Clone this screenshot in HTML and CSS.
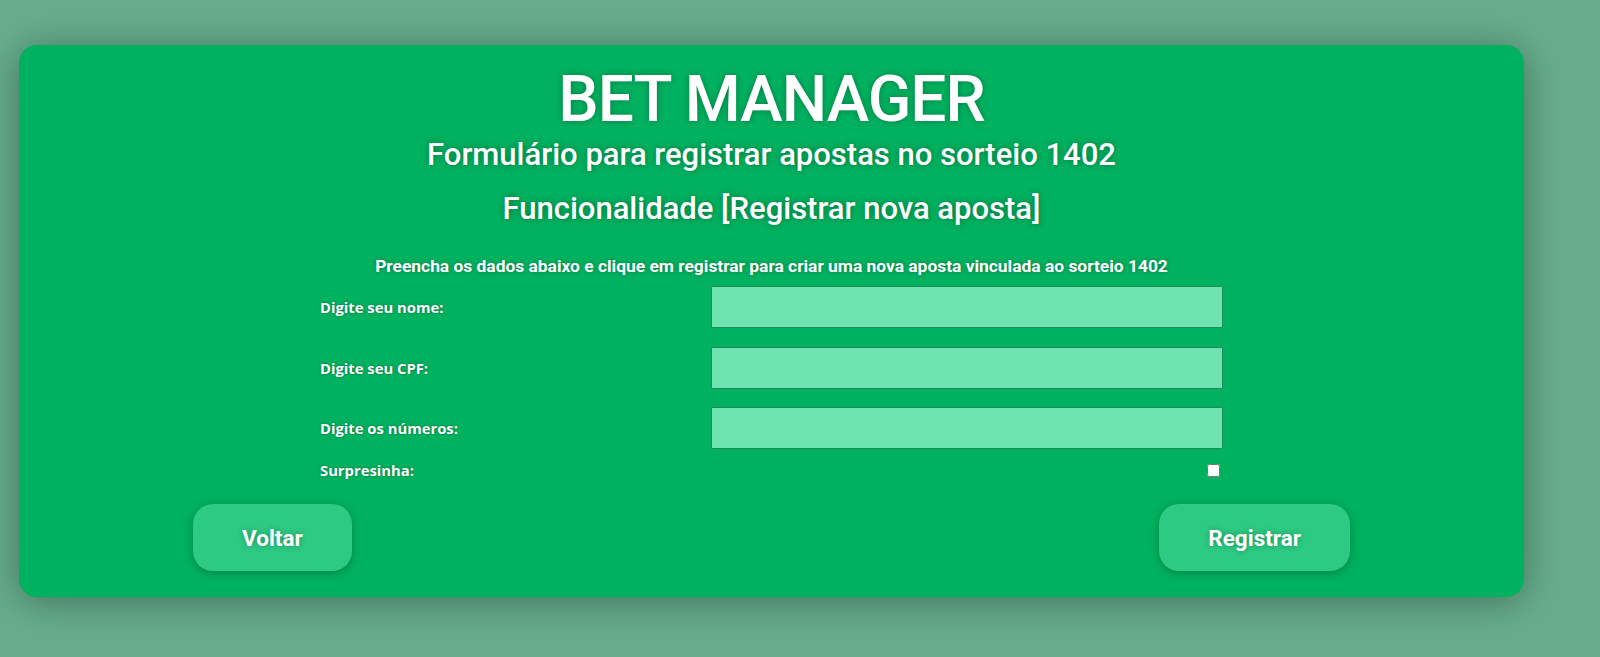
FILE: index.html
```html
<!DOCTYPE html>
<html lang="pt-BR">
<head>
<meta charset="utf-8">
<title>Bet Manager</title>
<link rel="stylesheet" href="styles.css">
</head>
<body>
<main class="card">
  <h1 class="title">BET MANAGER</h1>
  <h2 class="subtitle">Formulário para registrar apostas no sorteio 1402</h2>
  <h2 class="subtitle feature">Funcionalidade [Registrar nova aposta]</h2>
  <p class="intro">Preencha os dados abaixo e clique em registrar para criar uma nova aposta vinculada ao sorteio 1402</p>
  <form class="form">
    <div class="row">
      <label class="label" for="nome">Digite seu nome:</label>
      <input class="field" id="nome" type="text">
    </div>
    <div class="row">
      <label class="label" for="cpf">Digite seu CPF:</label>
      <input class="field" id="cpf" type="text">
    </div>
    <div class="row last-field">
      <label class="label" for="numeros">Digite os números:</label>
      <input class="field" id="numeros" type="text">
    </div>
    <div class="row check-row">
      <label class="label" for="surpresinha">Surpresinha:</label>
      <input class="check" id="surpresinha" type="checkbox">
    </div>
  </form>
  <div class="actions">
    <button class="btn" type="button">Voltar</button>
    <button class="btn" type="button">Registrar</button>
  </div>
</main>
</body>
</html>
```
FILE: styles.css
```css
* { box-sizing: border-box; }

html, body {
  margin: 0;
  height: 100%;
}

body {
  background: #67ad8d;
  font-family: Roboto, "Liberation Sans", sans-serif;
  color: #fff;
  padding: 45px 0 0 19px;
}

.card {
  width: 1505px;
  height: 552px;
  background: #00b15f;
  border-radius: 18px;
  box-shadow: 0 4px 40px rgba(0, 0, 0, 0.35);
  padding: 17px 0 0 0;
  display: flex;
  flex-direction: column;
  align-items: center;
}

.title {
  margin: 0;
  font-size: 64px;
  line-height: 76px;
  font-weight: 500;
  letter-spacing: -1px;
  text-shadow: 0 0 6px rgba(0, 0, 0, 0.3);
}

.subtitle {
  margin: -1px 0 0 0;
  font-size: 31px;
  line-height: 36px;
  font-weight: 500;
  text-shadow: 0 0 6px rgba(0, 0, 0, 0.35);
}

.subtitle.feature {
  margin-top: 18px;
}

.intro {
  margin: 29px 0 0 0;
  font-size: 17.4px;
  line-height: 20px;
  font-weight: 700;
  text-shadow: 0 0 4px rgba(0, 0, 0, 0.3);
}

.form {
  margin-top: 10px;
  width: 903px;
  display: flex;
  flex-direction: column;
}

.row {
  display: grid;
  grid-template-columns: 391px 512px;
  align-items: center;
  margin-bottom: 18.5px;
}

.row.last-field {
  margin-bottom: 11px;
}

.row.check-row {
  margin-bottom: 0;
  height: 18px;
}

.label {
  font-family: "Open Sans", "DejaVu Sans", sans-serif;
  font-size: 14.8px;
  font-weight: 700;
  text-shadow: 0 0 3px rgba(0, 0, 0, 0.35);
}

.field {
  height: 42px;
  width: 512px;
  margin: 0;
  background: #6ee5b0;
  border: 1px solid #1c8f58;
  border-radius: 1px;
}

.check {
  justify-self: end;
  width: 13px;
  height: 13px;
  margin: 0 3px 0 0;
}

.actions {
  margin-top: 26px;
  width: 100%;
  padding: 0 174px 0 174px;
  display: flex;
  justify-content: space-between;
}

.btn {
  height: 67px;
  padding: 0 49px;
  border: none;
  border-radius: 20px;
  background: #2dca84;
  color: #fff;
  font-family: Roboto, "Liberation Sans", sans-serif;
  font-size: 22.5px;
  font-weight: 700;
  text-shadow: 0 0 6px rgba(0, 0, 0, 0.3);
  box-shadow: 0 2px 8px rgba(0, 0, 0, 0.25);
}
```
